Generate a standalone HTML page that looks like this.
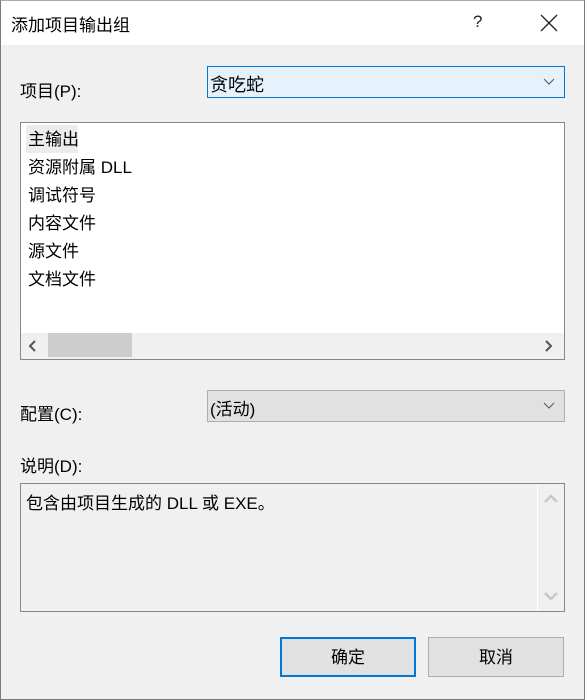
<!DOCTYPE html>
<html><head><meta charset="utf-8"><style>
*{margin:0;padding:0;box-sizing:border-box}
body{width:585px;height:700px;background:#f0f0f0;font-family:"Liberation Sans","Noto Sans CJK SC",sans-serif;font-size:17px;color:#000;position:relative;overflow:hidden}
.a{position:absolute;white-space:nowrap}
#win{position:absolute;left:0;top:0;width:585px;height:700px;border:1px solid #7a7a7a;border-top:1px solid #aaa}
</style></head><body>
<div class="a" style="left:0;top:0;width:585px;height:45px;background:#fff"></div>
<div class="a" style="left:11px;top:11px;font-size:17px">添加项目输出组</div>
<div class="a" style="left:473px;top:12px;font-size:17px;color:#222">?</div>
<svg class="a" style="left:540px;top:14px" width="18" height="18"><path d="M1 1L17 17M17 1L1 17" stroke="#222" stroke-width="1.3"/></svg>

<div class="a" style="left:20px;top:77px">项目(P):</div>
<div class="a" style="left:207px;top:66px;width:358px;height:32px;background:#e5f1fb;border:1px solid #0078d7"></div>
<div class="a" style="left:210px;top:71px;font-size:18px">贪吃蛇</div>
<svg class="a" style="left:543px;top:78px" width="12" height="8"><path d="M1 1L6 6L11 1" stroke="#555" fill="none"/></svg>

<div class="a" style="left:20px;top:122px;width:545px;height:238px;background:#fff;border:1px solid #828790"></div>
<div class="a" style="left:26px;top:125px;width:52px;height:28px;background:#ececec"></div>
<div class="a" style="left:28px;top:126px;line-height:28px">主输出<br>资源附属 DLL<br>调试符号<br>内容文件<br>源文件<br>文档文件</div>
<div class="a" style="left:21px;top:333px;width:543px;height:26px;background:#f0f0f0"></div>
<div class="a" style="left:48px;top:333px;width:84px;height:24px;background:#cdcdcd"></div>
<svg class="a" style="left:28px;top:340px" width="10" height="12"><path d="M7 1L2 6L7 11" stroke="#555" stroke-width="2" fill="none"/></svg>
<svg class="a" style="left:543px;top:340px" width="10" height="12"><path d="M3 1L8 6L3 11" stroke="#555" stroke-width="2" fill="none"/></svg>

<div class="a" style="left:20px;top:400px">配置(C):</div>
<div class="a" style="left:207px;top:390px;width:358px;height:32px;background:#e1e1e1;border:1px solid #adadad"></div>
<div class="a" style="left:210px;top:395px">(活动)</div>
<svg class="a" style="left:543px;top:402px" width="12" height="8"><path d="M1 1L6 6L11 1" stroke="#555" fill="none"/></svg>

<div class="a" style="left:20px;top:452px">说明(D):</div>
<div class="a" style="left:20px;top:483px;width:545px;height:129px;background:#f0f0f0;border:1px solid #828790"></div>
<div class="a" style="left:537px;top:484px;width:1px;height:127px;background:#fff"></div>
<div class="a" style="left:26px;top:489px">包含由项目生成的 DLL 或 EXE。</div>
<svg class="a" style="left:544px;top:494px" width="14" height="10"><path d="M1 8L7 2L13 8" stroke="#c8c8c8" stroke-width="2.5" fill="none"/></svg>
<svg class="a" style="left:544px;top:591px" width="14" height="10"><path d="M1 2L7 8L13 2" stroke="#c8c8c8" stroke-width="2.5" fill="none"/></svg>

<div class="a" style="left:280px;top:637px;width:136px;height:40px;background:#e1e1e1;border:2px solid #0078d7;text-align:center;line-height:38px">确定</div>
<div class="a" style="left:428px;top:637px;width:136px;height:40px;background:#e1e1e1;border:1px solid #adadad;text-align:center;line-height:40px">取消</div>
<div id="win"></div>
</body></html>
